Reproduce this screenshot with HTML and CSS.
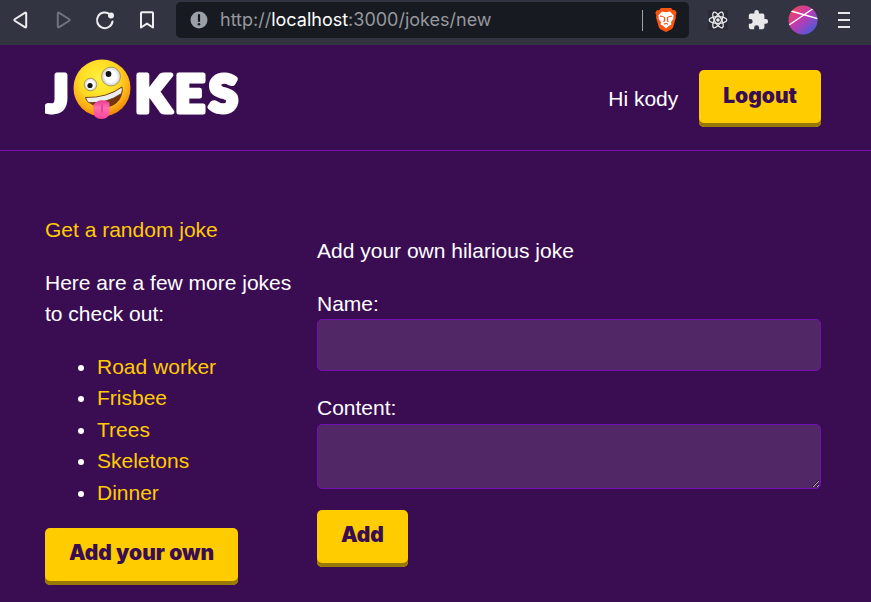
FILE: index.html
```html
<!DOCTYPE html>
<html lang="en">
<head>
<meta charset="utf-8">
<meta name="viewport" content="width=device-width, initial-scale=1">
<title>Remix Jokes | New</title>
<link rel="stylesheet" href="styles.css">
</head>
<body>
<div class="toolbar">
  <div class="nav">
    <button class="tool" aria-label="Back"><svg width="20" height="20" viewBox="0 0 20 20"><path d="M15.200 3.500v13q0 1.400-1.400.6L4.100 11q-1.500-1 0-2L13.800 2.900q1.400-.8 1.400.6z" class="line"/></svg></button>
    <button class="tool dim" aria-label="Forward"><svg width="20" height="20" viewBox="0 0 20 20"><path d="M4.800 3.500v13q0 1.400 1.400.6L15.900 11q1.500-1 0-2L6.200 2.900q-1.400-.8-1.400.6z" class="line"/></svg></button>
    <button class="tool" aria-label="Reload"><svg width="20" height="20" viewBox="0 0 20 20"><path d="M15 4.500A7.800 7.800 0 1 0 17.500 11.500" class="line"/><circle cx="16" cy="5.500" r="3" fill="currentColor"/></svg></button>
    <button class="tool" aria-label="Bookmark"><svg width="20" height="20" viewBox="0 0 20 20"><path d="M4 3q0-.8.8-.8h10.400q.8 0 .8.8v14.500L10 13.600 4 17.500z" class="line"/></svg></button>
  </div>
  <div class="address">
    <svg width="18" height="18" viewBox="0 0 18 18"><circle cx="9" cy="9" r="8.500" fill="#9aa0a8"/><path d="M9 4v6" stroke="#171a21" stroke-width="2.200" stroke-linecap="round"/><circle cx="9" cy="13.300" r="1.300" fill="#171a21"/></svg>
    <div class="url" role="textbox" aria-label="Address">http://<span class="host">localhost</span>:3000/jokes/new</div>
    <span class="divider"></span>
    <button class="tool" aria-label="Brave Shields"><svg width="22" height="24" viewBox="0 0 22 24"><path d="M6 0h10l2 2.200 2-.2 1.700 3-1 2.400.3 2-2.800 9.500q-.5 1.500-1.700 2.300L11 24l-5.500-2.800q-1.200-.8-1.700-2.300L1 9.400l.3-2L.3 5 2 2l2 .2z" fill="#fb5410"/><path d="M7 3.500l4 .8 4-.8 3.700 4-.5 2.200.3 1-2.500 3.300.4 2.500-2.400 1.300-3 2.800-3-2.800-2.400-1.300.4-2.500-2.500-3.300.3-1-.5-2.200z" fill="#fff"/><path d="M5 8l3.800 1M17 8l-3.800 1M9.500 9v3.500l-1 1.500M12.500 9v3.500l1 1.500M9 16.300l2-1 2 1" fill="none" stroke="#fb5410" stroke-width="1.200"/></svg></button>
  </div>
  <div class="extensions">
    <button class="tool react" aria-label="React Developer Tools"><svg width="20" height="20" viewBox="0 0 20 20" fill="none" stroke="#e8e8ea" stroke-width="1.300"><ellipse cx="10" cy="10" rx="8.800" ry="3.400"/><ellipse cx="10" cy="10" rx="8.800" ry="3.400" transform="rotate(60 10 10)"/><ellipse cx="10" cy="10" rx="8.800" ry="3.400" transform="rotate(120 10 10)"/><circle cx="10" cy="10" r="1.800" fill="#e8e8ea" stroke="none"/></svg></button>
    <button class="tool" aria-label="Extensions"><svg width="22" height="22" viewBox="0 0 24 24"><path fill="#e8e8ea" d="M20.500 11H19V7a2 2 0 0 0-2-2h-4V3.500a2.500 2.500 0 0 0-5 0V5H4a2 2 0 0 0-2 2v3.800h1.500a2.700 2.700 0 0 1 0 5.400H2V20a2 2 0 0 0 2 2h3.800v-1.500a2.700 2.700 0 0 1 5.400 0V22H17a2 2 0 0 0 2-2v-4h1.500a2.500 2.500 0 0 0 0-5z"/></svg></button>
    <button class="tool" aria-label="Profile"><svg width="30" height="30" viewBox="0 0 30 30"><defs><linearGradient id="avatar" x1=".1" y1=".1" x2=".85" y2=".9"><stop offset="0" stop-color="#f04a58"/><stop offset=".45" stop-color="#c238b0"/><stop offset="1" stop-color="#4b5bdc"/></linearGradient><clipPath id="disc"><circle cx="15" cy="15" r="14.500"/></clipPath></defs><g clip-path="url(#disc)"><path fill="url(#avatar)" d="M0 0h30v30H0z"/><path d="M3 6l28 8M1 20L26 3" stroke="#fff" stroke-width="1.500"/></g></svg></button>
    <button class="tool" aria-label="Menu"><svg width="14" height="20" viewBox="0 0 14 20"><path d="M1 3h12M1 10h12M1 17h12" stroke="#e8e8ea" stroke-width="2"/></svg></button>
  </div>
</div>

<header class="header">
  <h1 class="logo">
    <a href="#" aria-label="Jokes">
      <svg class="wordmark" width="204" height="74" viewBox="0 0 204 74">
        <defs>
          <radialGradient id="face" cx=".45" cy=".35" r=".66"><stop offset="0" stop-color="#fff23c"/><stop offset=".5" stop-color="#ffdc25"/><stop offset=".8" stop-color="#fdae16"/><stop offset="1" stop-color="#ed8505"/></radialGradient>
          <linearGradient id="tongue" x1="0" y1="0" x2="0" y2="1"><stop offset="0" stop-color="#e83b8e"/><stop offset=".4" stop-color="#ff6db0"/><stop offset="1" stop-color="#fa4398"/></linearGradient>
          <radialGradient id="eye"><stop offset=".6" stop-color="#fff"/><stop offset="1" stop-color="#c9c9c9"/></radialGradient>
        </defs>
        <text class="letters" x="1" y="55">J</text>
        <circle cx="57" cy="31" r="28.500" fill="url(#face)"/>
        <circle cx="66" cy="19.500" r="9.500" fill="url(#eye)" stroke="#a78a4c" stroke-width=".8"/>
        <circle cx="63.500" cy="17" r="2.900" fill="#151515"/>
        <circle cx="45.500" cy="27.500" r="6.300" fill="url(#eye)" stroke="#a78a4c" stroke-width=".8"/>
        <circle cx="45" cy="28.500" r="2.600" fill="#151515"/>
        <path d="M40 40.500Q62 41 77 29.500 79 40 71 46.500 62 53 52 50 43 47 40 40.500z" fill="#74370d"/>
        <path d="M40.500 40.500Q62 41 77 30q.7 3.500-.5 6.500Q61 47 43.500 45.500 41.500 43.500 40.500 40.500z" fill="#eee" stroke="#663411" stroke-width=".8"/>
        <path d="M48.500 47.500Q55 40 64.500 45.500V54q0 8-8 8t-8-8z" fill="url(#tongue)"/>
        <path d="M57 48v7" stroke="#e23b8a" stroke-width="1.500" stroke-linecap="round"/>
        <text class="letters" x="90" y="55">K</text>
        <text class="letters" x="130" y="55">E</text>
        <text class="letters" x="164" y="55">S</text>
      </svg>
    </a>
  </h1>
  <form class="user">
    <span>Hi kody</span>
    <button class="button" type="button">Logout</button>
  </form>
</header>

<main class="main">
  <nav class="jokes">
    <a href="#">Get a random joke</a>
    <p>Here are a few more jokes to check out:</p>
    <ul>
      <li><a href="#">Road worker</a></li>
      <li><a href="#">Frisbee</a></li>
      <li><a href="#">Trees</a></li>
      <li><a href="#">Skeletons</a></li>
      <li><a href="#">Dinner</a></li>
    </ul>
    <a class="button" href="#">Add your own</a>
  </nav>
  <section class="new-joke">
    <p>Add your own hilarious joke</p>
    <form>
      <div class="field">
        <label for="name">Name:</label>
        <input id="name" name="name" type="text">
      </div>
      <div class="field">
        <label for="content">Content:</label>
        <textarea id="content" name="content"></textarea>
      </div>
      <button class="button" type="button">Add</button>
    </form>
  </section>
</main>
</body>
</html>
```

FILE: styles.css
```css
:root {
  --purple: #3a0d52;
  --border: #750fb3;
  --yellow: #ffcc00;
  --yellow-dark: #997a00;
}

* {
  box-sizing: border-box;
}

body {
  margin: 0;
  background: var(--purple);
  color: #fff;
  font: 21px/1.5 "Liberation Sans", Arial, sans-serif;
}

a {
  color: var(--yellow);
  text-decoration: none;
}

/* Browser toolbar */
.toolbar {
  display: flex;
  align-items: center;
  gap: 19px;
  height: 45px;
  padding: 0 20px 5px 11px;
  background: #323442;
}

.nav {
  display: flex;
  gap: 22px;
}

.tool {
  display: flex;
  padding: 0;
  border: 0;
  background: none;
  color: #eeeef0;
}

.dim {
  color: #70727c;
}

.line {
  fill: none;
  stroke: currentColor;
  stroke-width: 2;
  stroke-linejoin: round;
  stroke-linecap: round;
}

.address {
  display: flex;
  flex: 1;
  align-items: center;
  gap: 12px;
  height: 36px;
  padding: 0 12px 0 14px;
  border-radius: 5px;
  background: #171a21;
}

.url {
  flex: 1;
  color: #96989d;
  font: 18px/24px Inter, sans-serif;
  white-space: nowrap;
}

.host {
  color: #fff;
}

.divider {
  width: 1px;
  height: 21px;
  background: #a0a2a6;
}

.extensions {
  display: flex;
  align-items: center;
  gap: 19px;
}

.react {
  background: #292c36;
}

/* Site header */
.header {
  display: flex;
  align-items: center;
  justify-content: space-between;
  height: 106px;
  padding: 2px 50px 0 45px;
  border-bottom: 1px solid var(--border);
}

.logo {
  margin: 0 0 10px;
  line-height: 1;
}

.logo a,
.wordmark {
  display: block;
}

.letters {
  fill: #fff;
  stroke: #fff;
  stroke-width: 5px;
  stroke-linejoin: round;
  font: 900 52px Lato, sans-serif;
}

.user {
  display: flex;
  align-items: center;
  gap: 21px;
}

.button {
  display: inline-block;
  height: 57px;
  padding: 12px 24px 18px;
  border: 0;
  border-radius: 5px;
  background: var(--yellow);
  box-shadow: inset 0 -4px 0 var(--yellow-dark);
  color: var(--purple);
  font: 900 21px/26px Inter, sans-serif;
}

/* Page content */
.main {
  display: grid;
  grid-template-columns: 251px 1fr;
  gap: 21px;
  padding: 63px 50px 16px 45px;
}

p {
  margin: 21px 0;
}

ul {
  margin: 21px 0 20px;
  padding-left: 52px;
}

.field {
  margin-bottom: 21px;
}

.field label,
.field input,
.field textarea {
  display: block;
}

.field input,
.field textarea {
  width: 100%;
  padding: 9px;
  border: 1px solid var(--border);
  border-radius: 5px;
  background: #512765;
  color: #fff;
  font: inherit;
}

.field input {
  height: 52px;
}

.field textarea {
  height: 65px;
  resize: vertical;
}
```
